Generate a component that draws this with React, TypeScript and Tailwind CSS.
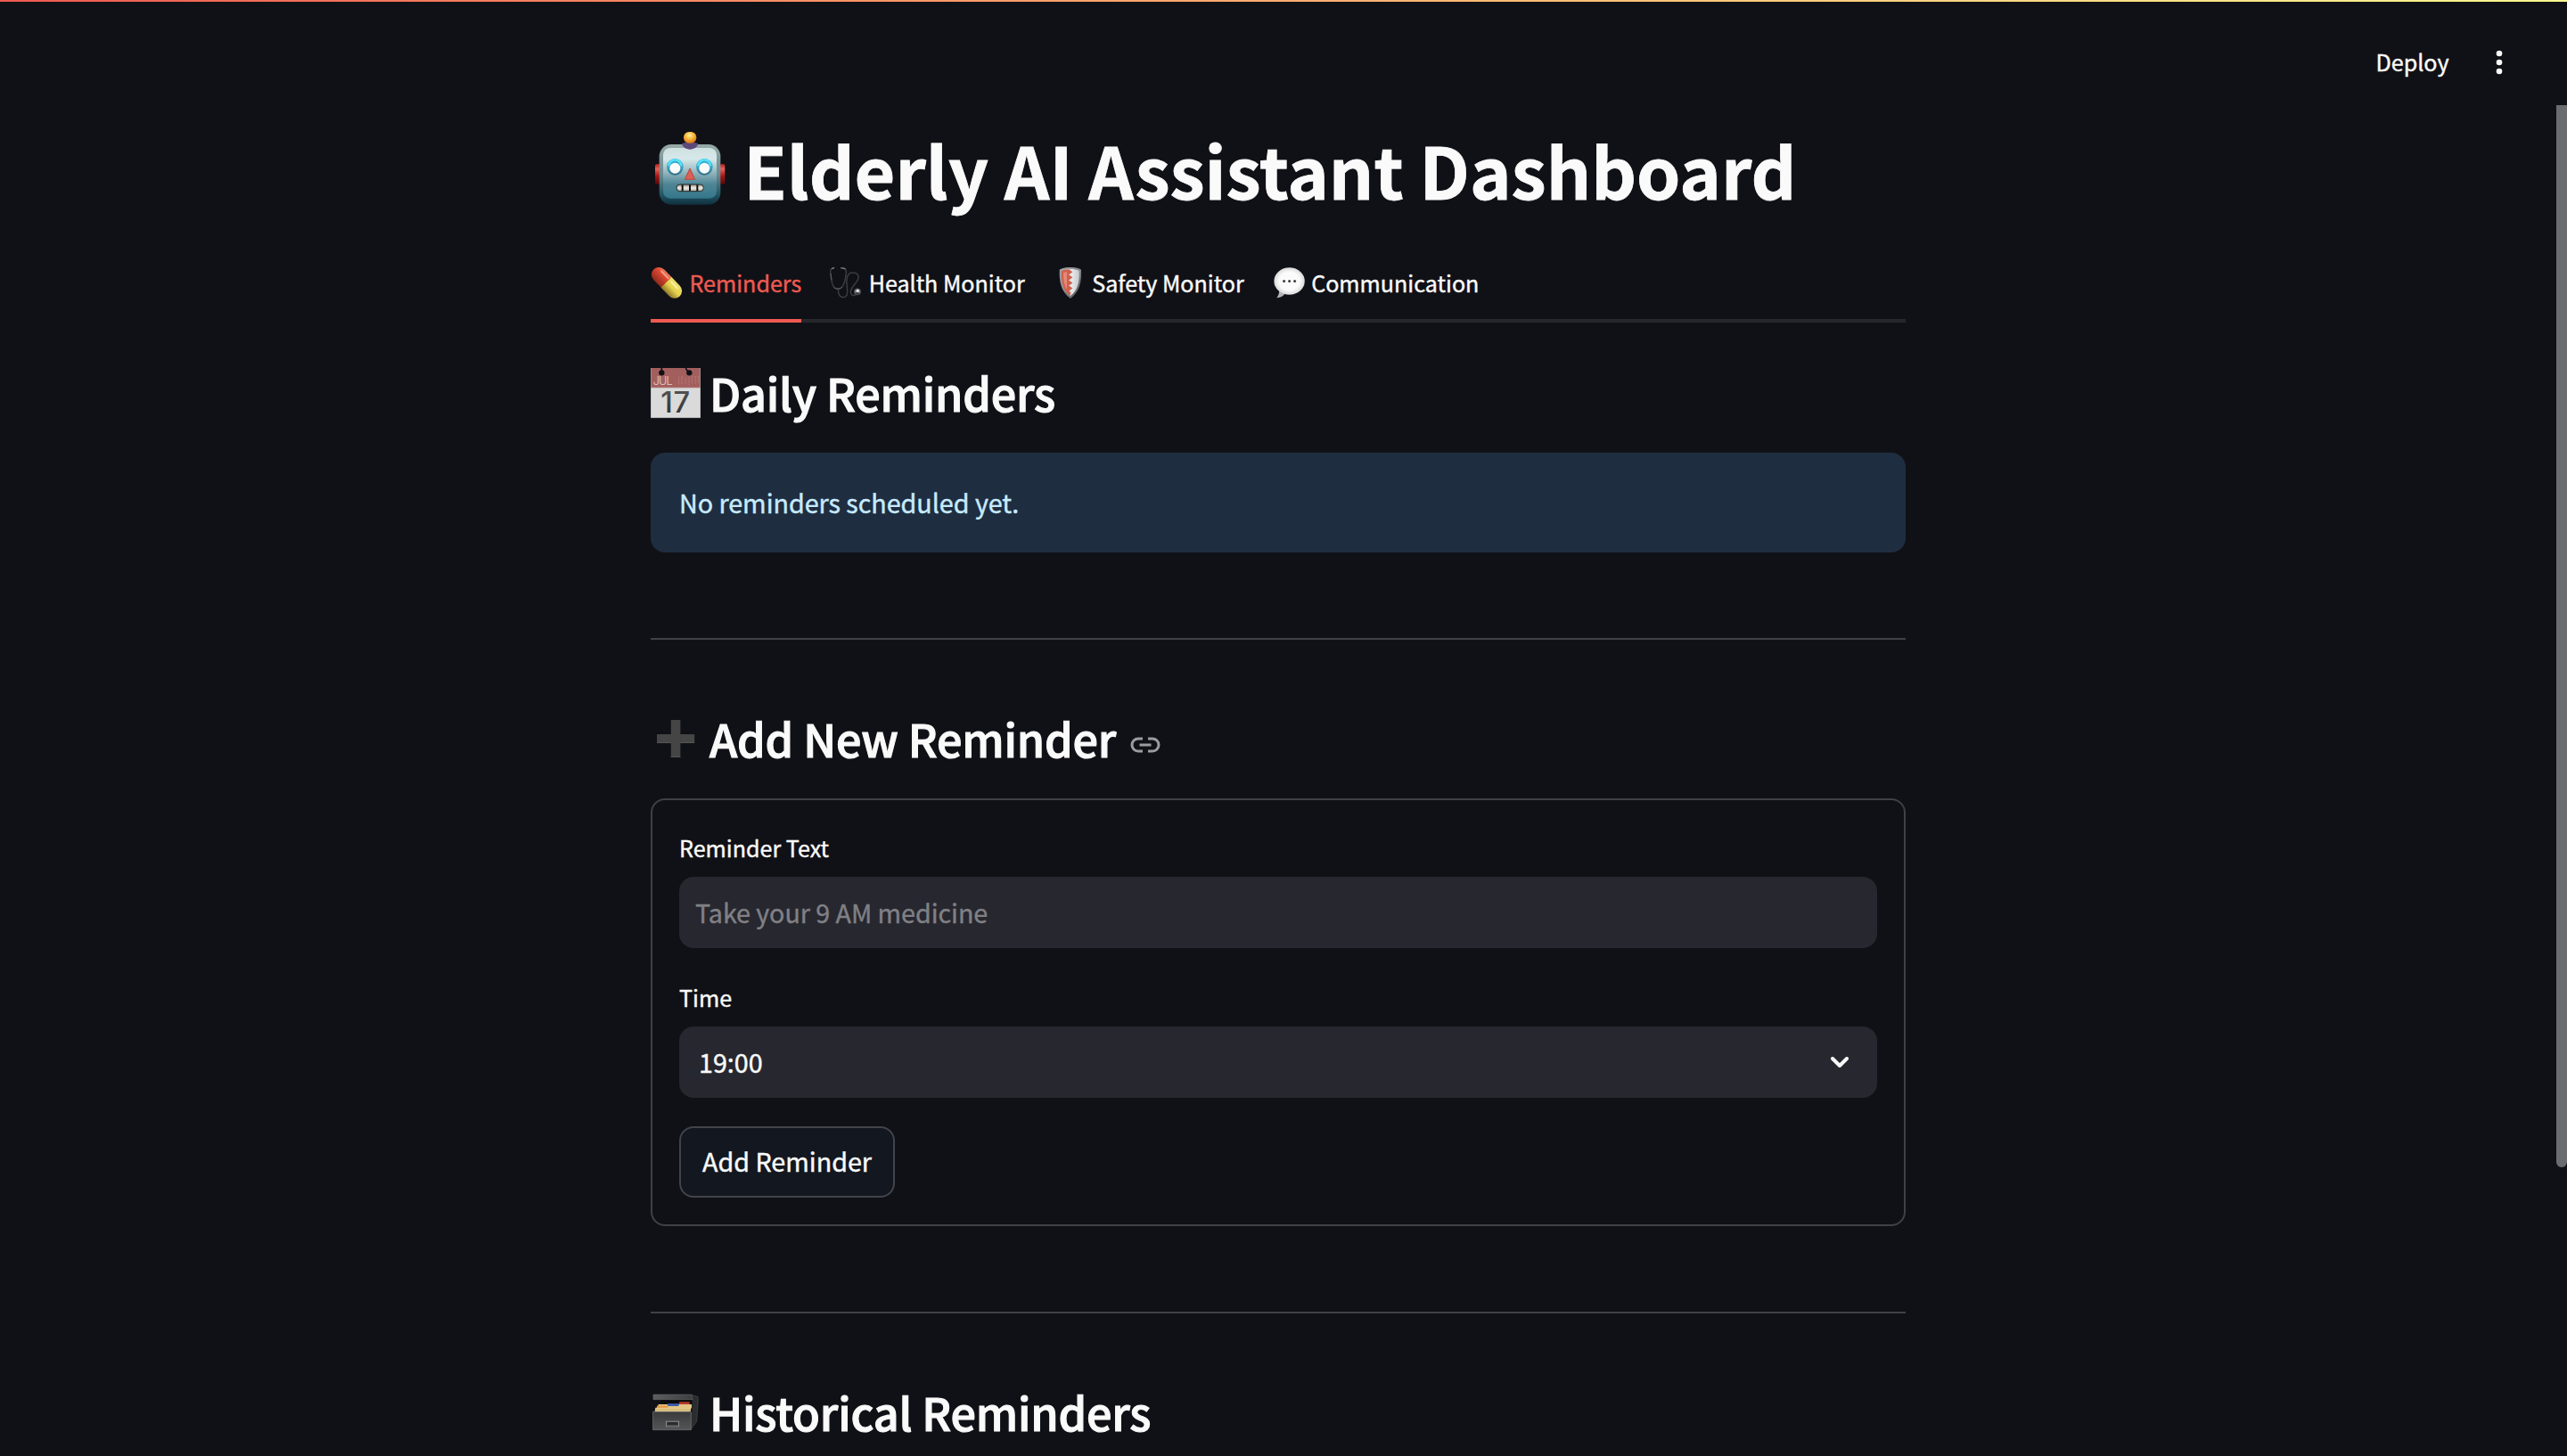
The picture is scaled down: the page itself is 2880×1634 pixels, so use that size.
import type { ReactNode } from "react";

function RobotIcon() {
  return (
    <svg className="h-[100px] w-[90px] shrink-0" viewBox="0 0 270 300" aria-hidden="true">
      <defs>
        <linearGradient id="robot-face" x1="0" y1="0" x2="0" y2="1">
          <stop offset="0" stopColor="#cfe0e0" />
          <stop offset="0.22" stopColor="#d6e8e9" />
          <stop offset="0.5" stopColor="#8fb3bb" />
          <stop offset="0.72" stopColor="#4d8595" />
          <stop offset="1" stopColor="#34778a" />
        </linearGradient>
        <linearGradient id="robot-edge" x1="0" y1="0" x2="0" y2="1">
          <stop offset="0" stopColor="#96aaa8" />
          <stop offset="0.5" stopColor="#6a8a90" />
          <stop offset="0.85" stopColor="#1f5263" />
          <stop offset="1" stopColor="#10303e" />
        </linearGradient>
        <radialGradient id="robot-bulb" cx="0.45" cy="0.3" r="0.7">
          <stop offset="0" stopColor="#fff0a0" />
          <stop offset="0.45" stopColor="#fbbb3e" />
          <stop offset="1" stopColor="#d9731c" />
        </radialGradient>
        <linearGradient id="robot-ear" x1="0" y1="0" x2="0" y2="1">
          <stop offset="0" stopColor="#b01f1c" />
          <stop offset="0.25" stopColor="#e8605a" />
          <stop offset="0.6" stopColor="#a81512" />
          <stop offset="1" stopColor="#5a0808" />
        </linearGradient>
        <linearGradient id="robot-eye" x1="0" y1="0" x2="0" y2="1">
          <stop offset="0" stopColor="#2cb4e2" />
          <stop offset="0.5" stopColor="#3fa6c6" />
          <stop offset="1" stopColor="#2f6c84" />
        </linearGradient>
        <linearGradient id="robot-teeth" x1="0" y1="0" x2="0" y2="1">
          <stop offset="0" stopColor="#8d8b80" />
          <stop offset="0.5" stopColor="#efeee6" />
          <stop offset="1" stopColor="#a9a79b" />
        </linearGradient>
      </defs>
      <rect x="15" y="132" width="18" height="68" rx="6" fill="url(#robot-ear)" />
      <rect x="232" y="132" width="18" height="68" rx="6" fill="url(#robot-ear)" />
      <rect x="29" y="66" width="206" height="203" rx="40" fill="url(#robot-edge)" />
      <rect x="42" y="78" width="180" height="170" rx="24" fill="url(#robot-face)" />
      <path d="M105 64C116 57 148 57 160 64C158 75 147 83 132 83C118 83 107 75 105 64Z" fill="#5d4879" />
      <rect x="111" y="24" width="43" height="38" rx="18" fill="url(#robot-bulb)" />
      {[82, 181].map((cx) => (
        <g key={cx}>
          <circle cx={cx} cy="142" r="28" fill="url(#robot-eye)" />
          <path d={`M${cx - 21} 139A21 21 0 0 1 ${cx + 21} 139`} fill="none" stroke="#56e3f7" strokeWidth="7" />
          <circle cx={cx} cy="146" r="18" fill="#fbfdfd" />
        </g>
      ))}
      <path d="M132 147L149 184H115Z" fill="#dc5f55" stroke="#b64741" strokeWidth="3" strokeLinejoin="round" />
      <rect x="87" y="201" width="91" height="23" rx="11.5" fill="url(#robot-teeth)" stroke="#25292a" strokeWidth="3" />
      <path d="M107 202V223M132 202V223M157 202V223" stroke="#0c0d0f" strokeWidth="6" />
    </svg>
  );
}

function PillIcon() {
  return (
    <svg className="h-10 w-[42px] shrink-0" viewBox="30 24 126 120" aria-hidden="true">
      <defs>
        <linearGradient id="pill-red" x1="0" y1="0" x2="0" y2="1">
          <stop offset="0" stopColor="#e9825f" />
          <stop offset="0.3" stopColor="#e04a32" />
          <stop offset="1" stopColor="#8e2a1c" />
        </linearGradient>
        <linearGradient id="pill-yellow" x1="0" y1="0" x2="0" y2="1">
          <stop offset="0" stopColor="#efe06c" />
          <stop offset="0.5" stopColor="#e6d24c" />
          <stop offset="1" stopColor="#8e7a2a" />
        </linearGradient>
      </defs>
      <g transform="rotate(46 84 82)">
        <path d="M84 57H46A25 25 0 0 0 46 107H84Z" fill="url(#pill-red)" />
        <path d="M82 57H122A25 25 0 0 1 122 107H82Z" fill="url(#pill-yellow)" />
        <path d="M44 68H76" stroke="#f6b9a0" strokeWidth="6" strokeLinecap="round" opacity="0.75" />
        <path d="M92 69H122" stroke="#fff6b4" strokeWidth="6" strokeLinecap="round" opacity="0.8" />
      </g>
    </svg>
  );
}

function StethoscopeIcon() {
  return (
    <svg className="h-10 w-[42px] shrink-0" viewBox="636 24 126 120" fill="none" aria-hidden="true">
      <g stroke="#3b3c40" strokeWidth="4.5" strokeLinecap="round" strokeLinejoin="round">
        <path d="M648 32C640 34 637 40 638 48C640 66 642 84 648 94C653 104 673 105 679 94C685 83 690 64 691 48C692 40 688 34 681 32" />
        <path d="M664 102C664 117 668 131 681 131C697 131 696 113 694 96C690 70 694 48 713 48C732 48 737 62 728 76C718 91 706 100 706 113C706 124 716 128 724 122" />
      </g>
      <path d="M643 34L650 32M674 32L687 35" stroke="#808287" strokeWidth="4" strokeLinecap="round" />
      <path d="M652 99C658 104 670 104 676 98M639 52L642 72" stroke="#606267" strokeWidth="3" strokeLinecap="round" />
      <circle cx="729" cy="112" r="11" fill="#77787d" stroke="#3d3e42" strokeWidth="3" />
      <circle cx="730" cy="109" r="5" fill="#e7e8ec" />
      <path d="M724 117L734 118" stroke="#29292d" strokeWidth="4" />
    </svg>
  );
}

function ShieldIcon() {
  return (
    <svg className="h-10 w-[42px] shrink-0" viewBox="0 0 42 40" aria-hidden="true">
      <defs>
        <linearGradient id="shield-rim" x1="0" y1="0" x2="1" y2="1">
          <stop offset="0" stopColor="#a6a7a9" />
          <stop offset="0.5" stopColor="#85878a" />
          <stop offset="1" stopColor="#4f5154" />
        </linearGradient>
        <linearGradient id="shield-silver" x1="0" y1="0" x2="1" y2="0">
          <stop offset="0" stopColor="#b3b8bd" />
          <stop offset="0.6" stopColor="#e6e9ec" />
          <stop offset="1" stopColor="#c3c7cb" />
        </linearGradient>
      </defs>
      <path d="M6.8 4.6C10.5 2.6 15 2 18.9 2S27.5 2.6 31 4.6C31.6 18 29.5 29.5 18.9 37C8.3 29.5 6.2 18 6.8 4.6Z" fill="url(#shield-rim)" />
      <path d="M9 6C12 4.6 15.5 4.1 18.9 4.1S26 4.6 28.8 6C29.3 18 27.3 27.7 18.9 34C10.5 27.7 8.5 18 9 6Z" fill="url(#shield-silver)" />
      <path d="M9 6C12 4.6 14 4.3 17 4.2L21.5 7.2L17 10.3L21.5 13.3L17 16.4L21.5 19.4L17 22.4L21.5 25.4L17.5 28.2L19.5 31L18.4 33.5C10.5 27.7 8.5 18 9 6Z" fill="#d0604b" />
      <path d="M11 8C10.8 15 12 22 15 27V7Z" fill="#ee9684" opacity="0.75" />
    </svg>
  );
}

function BubbleIcon() {
  return (
    <svg className="h-10 w-[42px] shrink-0" viewBox="0 0 42 40" aria-hidden="true">
      <defs>
        <radialGradient id="bubble" cx="0.5" cy="0.5" r="0.55">
          <stop offset="0.6" stopColor="#fbfbfb" />
          <stop offset="0.88" stopColor="#dcdcdc" />
          <stop offset="1" stopColor="#a9a9a9" />
        </radialGradient>
      </defs>
      <path d="M7 27C7.6 31 6.4 33.6 4.3 36.2C8.8 36.2 13 33.6 15 29.5Z" fill="#b4b4b4" />
      <ellipse cx="18.6" cy="17.5" rx="17.2" ry="15.3" fill="url(#bubble)" />
      <g fill="#3c3c3e">
        <circle cx="12.6" cy="17.4" r="1.5" />
        <circle cx="18.6" cy="17.4" r="1.5" />
        <circle cx="24.6" cy="17.4" r="1.5" />
      </g>
    </svg>
  );
}

function CalendarIcon() {
  return (
    <svg className="mr-[10px] h-[60px] w-14 shrink-0" viewBox="30 30 168 180" aria-hidden="true">
      <defs>
        <linearGradient id="cal-digits" x1="0" y1="0" x2="0" y2="1">
          <stop offset="0" stopColor="#5a5a5a" />
          <stop offset="1" stopColor="#2c2c2c" />
        </linearGradient>
      </defs>
      <rect x="30" y="39" width="168" height="168" fill="#dadada" />
      <rect x="30" y="39" width="168" height="66" fill="#a35f5e" />
      <path d="M30 105H198" stroke="#b98a89" strokeWidth="2" />
      <path d="M31 39V206H197V39" fill="none" stroke="#a9a9a9" strokeWidth="2" />
      <circle cx="67" cy="55" r="9.5" fill="#101116" />
      <circle cx="160" cy="55" r="9.5" fill="#101116" />
      <path d="M67 39V50M148 37C148 46 153 48 158 52" stroke="#101116" strokeWidth="5" fill="none" />
      <g stroke="#c48f8e" strokeWidth="3" strokeDasharray="2 3">
        <path d="M125 70V96M135 66V96M147 72V96M159 68V96M170 66V92M181 66V92M190 66V88" />
      </g>
      <text x="38" y="96" textLength="66" fontSize="38" fill="#e3cfcf" className="font-['Inter',sans-serif] font-light">JUL</text>
      <text x="64" y="189" textLength="98" fontSize="98" fill="url(#cal-digits)" className="font-['Inter',sans-serif]">17</text>
    </svg>
  );
}

function PlusIcon() {
  return (
    <svg className="mr-[10px] h-[60px] w-14 shrink-0" viewBox="0 0 56 60" aria-hidden="true">
      <path d="M22.8 10H33.4V26H49.2V36H33.4V52H22.8V36H7V26H22.8Z" fill="#454545" />
      <path d="M7 35.5H22.8M33.4 35.5H49.2M22.8 51.5H33.4" stroke="#555" strokeWidth="1" />
    </svg>
  );
}

function CabinetIcon() {
  return (
    <svg className="mr-[10px] h-[60px] w-14 shrink-0" viewBox="0 0 56 60" aria-hidden="true">
      <defs>
        <linearGradient id="cabinet-front" x1="0" y1="0" x2="0" y2="1">
          <stop offset="0" stopColor="#3a3b3c" />
          <stop offset="1" stopColor="#545556" />
        </linearGradient>
        <linearGradient id="cabinet-lid" x1="0" y1="0" x2="1" y2="0">
          <stop offset="0" stopColor="#5c5d5e" />
          <stop offset="1" stopColor="#3d3e3f" />
        </linearGradient>
      </defs>
      <g transform="translate(-20 -104) scale(0.3954 0.33333)">
        <path d="M166 346L185 353V372L181 436L164 464Z" fill="#2b2c2d" stroke="#48494a" strokeWidth="2" />
        <path d="M80 362H168V405H80Z" fill="#08090a" />
        <path d="M58 345H166L170 362H58Z" fill="url(#cabinet-lid)" stroke="#6a6b6c" strokeWidth="1.5" />
        <path d="M132 370H161V382H130Z" fill="#b5382a" />
        <path d="M99 376H131V386H99Z" fill="#3c5cae" />
        <path d="M72 378H99V384H129V378H167V390H72Z" fill="#e2c583" />
        <path d="M99 376H131V382H99Z" fill="#3c5cae" />
        <path d="M68 383H99V392H68Z" fill="#e6963f" />
        <path d="M64 389H166L163 404H62Z" fill="#e5cb8b" />
        <path d="M66 396H163" stroke="#bfa367" strokeWidth="2" />
        <path d="M57 403H165V464H57Z" fill="url(#cabinet-front)" stroke="#717273" strokeWidth="2" />
        <path d="M95 436H130V452H95Z" fill="#2a2b2c" stroke="#8b8c8d" strokeWidth="3" />
        <path d="M98 449H127" stroke="#4c4d4e" strokeWidth="4" />
      </g>
    </svg>
  );
}

function SectionHeading({ icon, children }: { icon: ReactNode; children: ReactNode }) {
  return (
    <h2 className="flex h-[60px] items-center whitespace-nowrap text-[50.3px] font-medium leading-[60px] tracking-[-0.2px] [-webkit-text-stroke:1.1px_#fafafa]">
      {icon}
      {children}
    </h2>
  );
}

function Tab({ icon, label, active = false }: { icon: ReactNode; label: string; active?: boolean }) {
  return (
    <button
      className={
        active
          ? "-mb-1 flex h-[84px] items-center gap-[1.4px] border-b-4 border-[#ee5a52] text-[#ee5a52]"
          : "-mb-1 flex h-[84px] items-center gap-[1.4px] border-b-4 border-transparent"
      }
    >
      {icon}
      <span className="pb-0.5 text-[25.1px] leading-10">{label}</span>
    </button>
  );
}

export default function App() {
  return (
    <div className="flex h-[1634px] w-[2880px] flex-col overflow-hidden bg-[#101116] font-['Noto_Sans_CJK_SC','Noto_Sans',sans-serif] text-[#fafafa] [-webkit-text-stroke:0.4px_currentColor]">
      <div className="h-0.5 shrink-0 bg-linear-to-r from-[#ee5a52] to-[#fcf990]" />
      <div className="flex min-h-0 flex-1">
        <div className="min-w-0 flex-1">
          <header className="flex h-[138px] items-center justify-end pb-[2px] pr-[60px]">
            <button className="w-[134.5px] pb-0.5 text-left text-[25.1px] leading-10">Deploy</button>
            <svg className="h-8 w-2" viewBox="0 0 8 32" fill="#fafafa" aria-hidden="true">
              <circle cx="4" cy="6" r="3.3" />
              <circle cx="4" cy="16" r="3.3" />
              <circle cx="4" cy="26" r="3.3" />
            </svg>
          </header>

          <main className="mx-auto w-[1408px]">
            <h1 className="flex h-[100px] items-center whitespace-nowrap text-[79px] font-bold leading-[100px] tracking-[-0.04px] [-webkit-text-stroke:0.8px_#fafafa]">
              <RobotIcon />
              <span className="ml-[14.3px]">Elderly AI Assistant Dashboard</span>
            </h1>

            <nav className="mt-[38px] flex h-[84px] gap-8 border-b-4 border-[#26272d]">
              <Tab active icon={<PillIcon />} label="Reminders" />
              <Tab icon={<StethoscopeIcon />} label="Health Monitor" />
              <Tab icon={<ShieldIcon />} label="Safety Monitor" />
              <Tab icon={<BubbleIcon />} label="Communication" />
            </nav>

            <section className="mt-12">
              <SectionHeading icon={<CalendarIcon />}>Daily Reminders</SectionHeading>
              <div className="mt-[38px] flex h-28 items-center rounded-2xl bg-[#1f2d40] px-8 text-[28.7px] tracking-[-0.03px] text-[#c7ebff]">
                No reminders scheduled yet.
              </div>
            </section>

            <hr className="mt-24 border-t-2 border-[#3f4145]" />

            <section className="mt-20">
              <SectionHeading icon={<PlusIcon />}>
                Add New Reminder
                <svg className="ml-[15.5px] mt-[15px] h-[18px] w-[34px]" viewBox="0 0 34 18" fill="none" stroke="#9b9ca0" strokeWidth="3" aria-hidden="true">
                  <path d="M14 2H9A7 7 0 0 0 9 16H14M20 2H25A7 7 0 0 1 25 16H20M10.5 9H23.5" />
                </svg>
              </SectionHeading>

              <form className="mt-[38px] rounded-2xl border-2 border-[#3f4145] p-[30px]" onSubmit={(e) => e.preventDefault()}>
                <label className="block h-[46px] text-[25.1px] leading-[46px]">Reminder Text</label>
                <input
                  className="mt-2.5 block h-20 w-full rounded-2xl bg-[#27272f] px-[18px] pb-0.5 text-[28.7px] tracking-[-0.05px] placeholder:text-[#808085] placeholder:opacity-100"
                  placeholder="Take your 9 AM medicine"
                />
                <label className="mt-8 block h-[46px] text-[25.1px] leading-[46px]">Time</label>
                <div className="mt-2.5 flex h-20 items-center justify-between rounded-2xl bg-[#27272f] pl-[22px] pr-8 text-[28.7px]">
                  19:00
                  <svg className="h-3 w-5" viewBox="0 0 20 12" fill="none" stroke="#fafafa" strokeWidth="4" strokeLinecap="round" strokeLinejoin="round" aria-hidden="true">
                    <path d="M2 2L10 10L18 2" />
                  </svg>
                </div>
                <button className="mt-8 flex h-20 w-[242px] items-center justify-center whitespace-nowrap rounded-2xl border-2 border-[#42444a] bg-[#13171f] pb-0.5 text-[28.7px]">
                  Add Reminder
                </button>
              </form>
            </section>

            <hr className="mt-24 border-t-2 border-[#3f4145]" />

            <section className="mt-20">
              <SectionHeading icon={<CabinetIcon />}>Historical Reminders</SectionHeading>
            </section>
          </main>
        </div>

        <div className="w-3 shrink-0 pt-[116px]">
          <div className="h-[1192px] rounded-b-md bg-[#6b6c70]" />
        </div>
      </div>
    </div>
  );
}
